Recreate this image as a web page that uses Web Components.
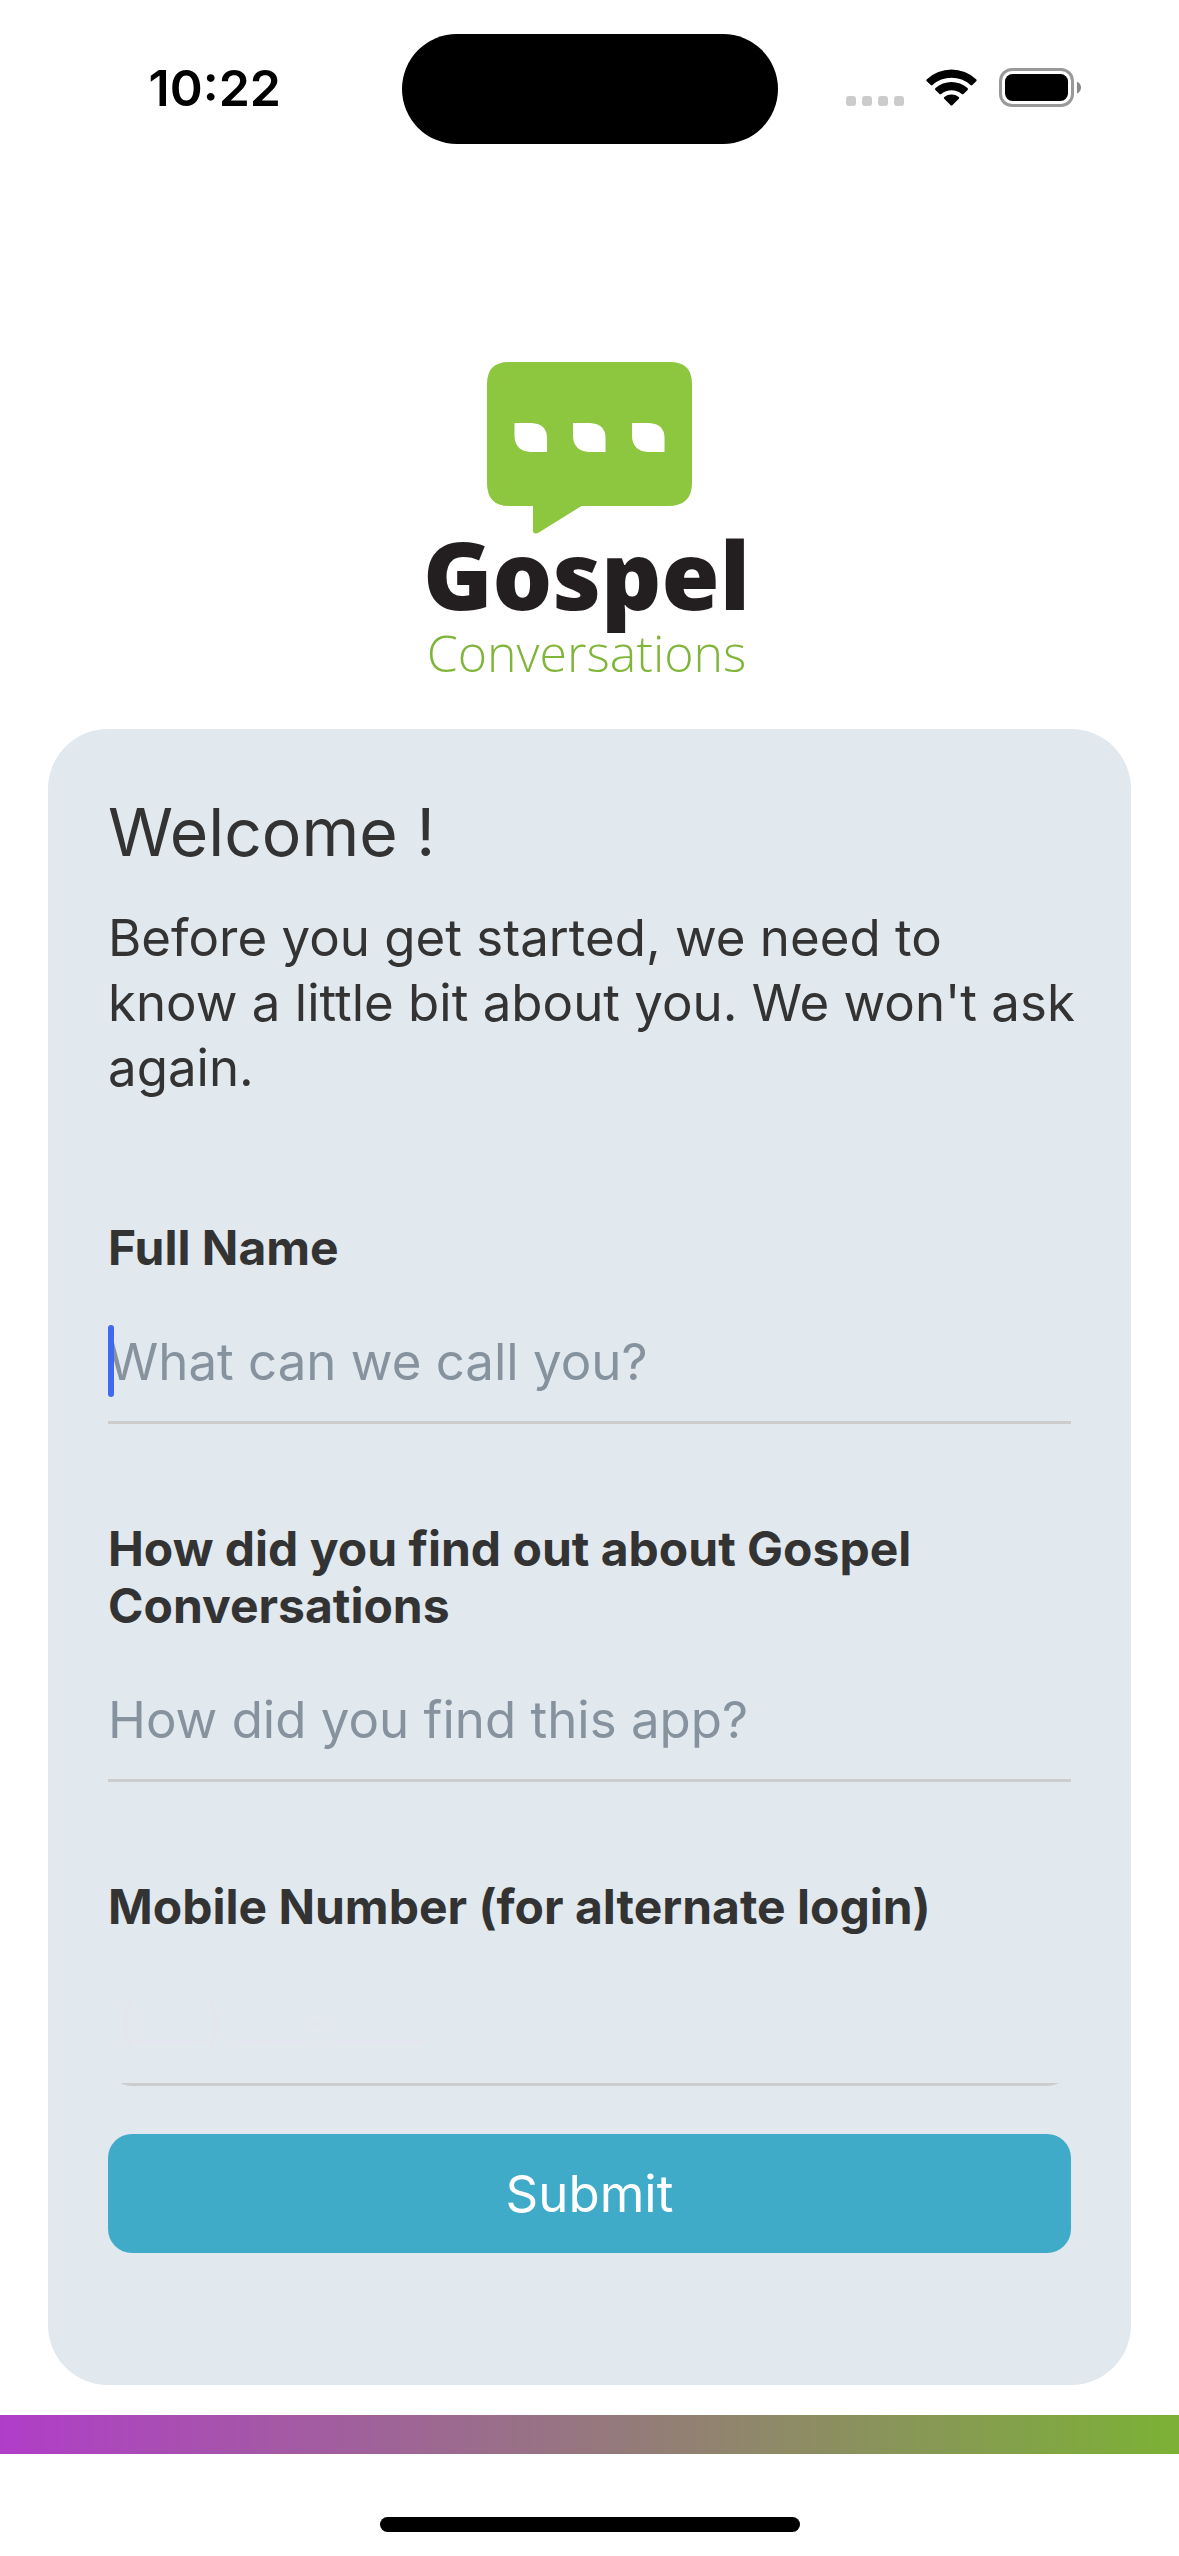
<!DOCTYPE html>
<html lang="en">
<head>
<meta charset="utf-8">
<meta name="viewport" content="width=device-width, initial-scale=1">
<title>Gospel Conversations</title>
<style>
  body { margin: 0; background: #fff; color: #333; font-family: Inter, "Liberation Sans", sans-serif; }
</style>
</head>
<body>
<welcome-screen></welcome-screen>

<script>
const define = (name, html, setup) => {
  const template = document.createElement('template');
  template.innerHTML = html;
  customElements.define(name, class extends HTMLElement {
    constructor() {
      super();
      this.attachShadow({ mode: 'open' }).append(template.content.cloneNode(true));
    }
    connectedCallback() { if (setup) setup(this, this.shadowRoot); }
  });
};

define('status-bar', `
  <style>
    :host { display: grid; grid-template-columns: 1fr 376px 1fr; align-items: center; padding-top: 34px; color: #000; }
    time { justify-self: center; padding: 0 0 2px 28px; font-size: 50px; line-height: 60px; font-weight: 600; }
    .island { height: 110px; border-radius: 55px; background: #000; }
    .icons { display: flex; align-items: flex-end; justify-content: flex-end; gap: 22px; padding: 0 98px 2px 0; }
    svg { display: block; }
  </style>
  <time>10:22</time>
  <div class="island"></div>
  <div class="icons">
    <svg width="58" height="40" viewBox="0 0 58 40" fill="#ccc" aria-label="No signal">
      <rect y="28" width="10" height="10" rx="3"/><rect x="16" y="28" width="10" height="10" rx="3"/>
      <rect x="32" y="28" width="10" height="10" rx="3"/><rect x="48" y="28" width="10" height="10" rx="3"/>
    </svg>
    <svg width="51" height="40" viewBox="0 0 51 40" aria-label="Wi-Fi">
      <path d="M0.8 13.2Q-.2 12.2.9 11.3A36 36 0 0 1 50.100 11.300Q51.200 12.200 50.200 13.200L46.300 17.100Q45.500 17.900 44.500 17A28.500 28.500 0 0 0 6.500 17Q5.500 17.900 4.700 17.100Z"/>
      <path d="M9.400 21.900Q8.500 21 9.500 20.100A24 24 0 0 1 41.500 20.100Q42.500 21 41.600 21.900L37.500 26Q36.700 26.700 35.700 25.900A16 16 0 0 0 15.300 25.900Q14.300 26.700 13.500 26Z"/>
      <path d="M18.200 30.700Q17.300 29.800 18.300 29A12 12 0 0 1 32.700 29Q33.700 29.800 32.800 30.700L26.300 37.200Q25.500 38 24.700 37.200Z"/>
    </svg>
    <svg width="82" height="40" viewBox="0 0 82 40" aria-label="Battery full">
      <rect x="1.500" y="1.500" width="72" height="36" rx="11.500" fill="none" stroke="#999" stroke-width="3"/>
      <rect x="6" y="6" width="63" height="27" rx="7.500"/>
      <path d="M78 13.500Q82 15.500 82 19.500T78 25.500Z" fill="#888"/>
    </svg>
  </div>
`);

define('brand-logo', `
  <style>
    :host { display: flex; flex-direction: column; align-items: center; font-family: "Open Sans", "Noto Sans", sans-serif; }
    svg { display: block; }
    .name, .sub { padding-right: 6px; }
    .name { font-size: 94px; line-height: 80px; font-weight: 800; color: #231f20; }
    .sub { font-size: 50px; line-height: 79px; font-weight: 300; color: #7fb539; }
  </style>
  <svg width="206" height="172" viewBox="0 0 206 172" aria-hidden="true">
    <path fill="#8dc63f" d="M22 0H183Q205 0 205 22V121Q205 144 181 144H94.500L51 171Q46 172.500 46 168.500V144H22Q0 144 0 121V22Q0 0 22 0Z"/>
    <g fill="#fff">
      <path d="M27.500 61H44.500Q60 62 60 76V90H43.500Q28 89 27.500 74Z"/>
      <path d="M86 61H103Q118.500 62 118.500 76V90H102Q86.500 89 86 74Z"/>
      <path d="M145 61H162Q177.500 62 177.500 76V90H161Q145.500 89 145 74Z"/>
    </g>
  </svg>
  <span class="name">Gospel</span>
  <span class="sub">Conversations</span>
`);

define('form-field', `
  <style>
    :host { display: block; }
    label { display: block; font-size: 48px; line-height: 57px; font-weight: 700; }
    .box { display: grid; position: relative; }
    input {
      box-sizing: border-box; width: 100%; height: 148px; margin: 0; padding: 53px 0 28px;
      border: 0; border-bottom: 3px solid #ccc; border-radius: 0; outline: 0; background: none;
      color: inherit; font-family: inherit; font-size: 51px; line-height: 64px;
    }
    input::placeholder { color: #86939e; opacity: 1; }
    :host([masked]) .box { border-radius: 24px; overflow: hidden; }
    :host([masked]) input { height: 151px; padding-left: 9px; padding-right: 9px; }
    :host([masked]) input::placeholder { color: #e4e6ef; }
    .caret { display: none; position: absolute; left: 0; top: 49px; width: 6px; height: 72px; border-radius: 3px; background: #4169f0; }
    :host([active]) .caret { display: block; }
  </style>
  <label for="control"><slot></slot></label>
  <div class="box"><input id="control"><span class="caret"></span></div>
`, (host, root) => {
  const input = root.querySelector('input');
  input.type = host.getAttribute('type') || 'text';
  input.placeholder = host.getAttribute('placeholder') || '';
});

define('submit-button', `
  <style>
    :host { display: block; }
    button { display: block; width: 100%; height: 119px; padding: 0; border: 0; border-radius: 24px; background: #40abc8; color: #fff; font-family: inherit; font-size: 51px; line-height: 64px; }
  </style>
  <button type="button"><slot></slot></button>
`);

define('form-card', `
  <style>
    :host { display: block; padding: 60px 48px 132px 60px; border-radius: 60px; background: #e1e8ee; }
    h1 { margin: 0 0 30px; font-size: 66px; line-height: 86px; font-weight: 400; }
    p { margin: 0 0 119px; font-size: 51px; line-height: 65px; }
    form { display: flex; flex-direction: column; gap: 96px; padding-right: 12px; }
    .last { display: flex; flex-direction: column; gap: 48px; }
  </style>
  <h1>Welcome !</h1>
  <p>Before you get started, we need to know a little bit about you. We won't ask again.</p>
  <form>
    <form-field active placeholder="What can we call you?">Full Name</form-field>
    <form-field placeholder="How did you find this app?">How did you find out about Gospel Conversations</form-field>
    <div class="last">
      <form-field masked type="tel" placeholder="(___) ___-____">Mobile Number (for alternate login)</form-field>
      <submit-button>Submit</submit-button>
    </div>
  </form>
`);

define('home-indicator', `
  <style>
    :host { display: flex; justify-content: center; padding: 63px 0 24px; }
    span { width: 420px; height: 15px; border-radius: 8px; background: #000; }
  </style>
  <span></span>
`);

define('welcome-screen', `
  <style>
    :host { display: flex; flex-direction: column; min-height: 100vh; }
    brand-logo { margin-top: 218px; }
    form-card { margin: 36px 48px 30px; }
    .accent { height: 39px; background: linear-gradient(90deg, #b03dc8, #7cb135); }
  </style>
  <status-bar></status-bar>
  <brand-logo></brand-logo>
  <form-card></form-card>
  <div class="accent"></div>
  <home-indicator></home-indicator>
`);
</script>
</body>
</html>
